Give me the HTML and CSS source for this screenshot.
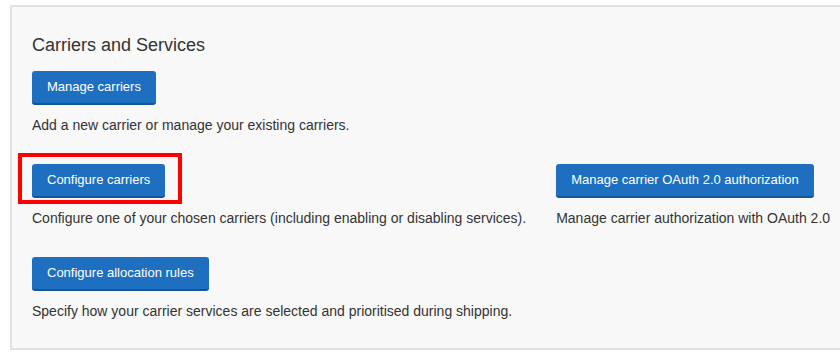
FILE: index.html
```html
<!DOCTYPE html>
<html lang="en">
<head>
<meta charset="UTF-8" />
<meta name="viewport" content="width=device-width, initial-scale=1.0" />
<title>Carriers and Services</title>
<link rel="stylesheet" href="styles.css">
</head>
<body>

<div class="panel">
  <h2>Carriers and Services</h2>

  <div class="section">
    <button class="btn">Manage carriers</button>
    <p>Add a new carrier or manage your existing carriers.</p>
  </div>

  <div class="section row">
    <div class="col">
      <button class="btn highlight">Configure carriers</button>
      <p>Configure one of your chosen carriers (including enabling or disabling services).</p>
    </div>
    <div class="col">
      <button class="btn">Manage carrier OAuth 2.0 authorization</button>
      <p>Manage carrier authorization with OAuth 2.0</p>
    </div>
  </div>

  <div class="section">
    <button class="btn">Configure allocation rules</button>
    <p>Specify how your carrier services are selected and prioritised during shipping.</p>
  </div>
</div>

</body>
</html>
```

FILE: styles.css
```css
body {
  margin: 0;
  font-family: "Liberation Sans", Arial, sans-serif;
  color: #333;
  background: #fff;
  overflow: hidden;
}

.panel {
  margin: 5px 0 0 10px;
  width: 860px;
  box-sizing: border-box;
  background: #f8f8f8;
  border: 2px solid #e2e2e2;
  padding: 26px 20px 27px 20px;
}

h2 {
  font-size: 18px;
  font-weight: normal;
  line-height: 24px;
  margin: 0 0 14px 0;
}

.section {
  margin-bottom: 29px;
}

.section:last-child {
  margin-bottom: 0;
}

.row {
  display: flex;
  gap: 30px;
}

.btn {
  display: inline-block;
  font-family: inherit;
  font-size: 13px;
  line-height: 20px;
  color: #fff;
  background: #1f6fc0;
  border: none;
  border-bottom: 2px solid #14559a;
  border-radius: 3px;
  padding: 6px 15px;
  cursor: pointer;
}

.highlight {
  position: relative;
}

.highlight::after {
  content: "";
  position: absolute;
  top: -11px;
  left: -14px;
  right: -17px;
  bottom: -8px;
  border: 4px solid #f00;
}

p {
  font-size: 14px;
  line-height: 20px;
  margin: 10px 0 0 0;
}
```
